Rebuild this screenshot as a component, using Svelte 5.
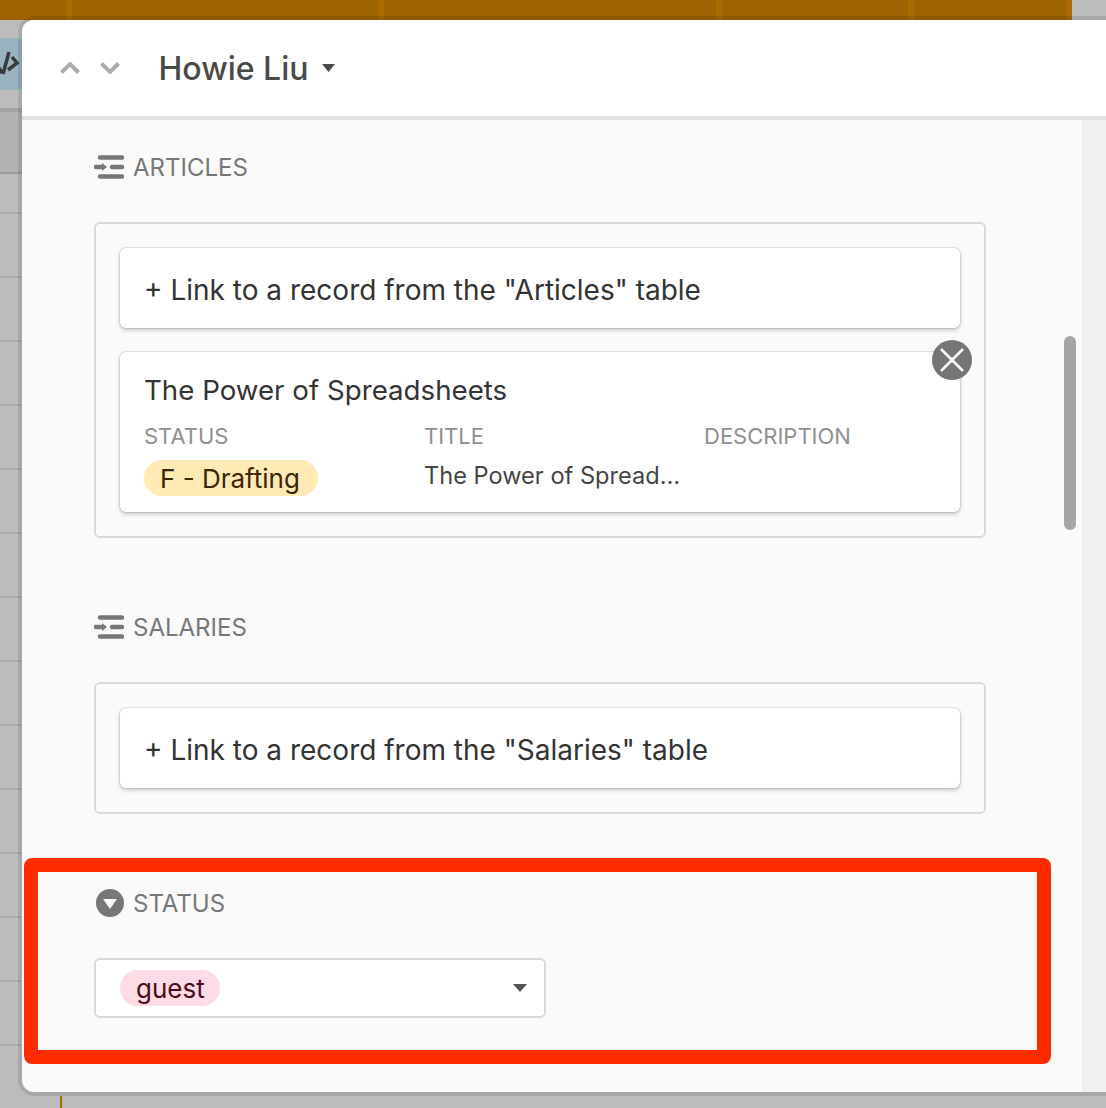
<script>
  const tabs = [72, 312, 338, 192, 158];
  const rows = Array.from({ length: 13 }, (_, i) => i);
</script>

<div class="backdrop">
  <div class="topbar">
    {#each tabs as w}
      <div class="tab" style="width:{w}px"></div>
    {/each}
  </div>
  <div class="band">
    <svg class="code" width="22" height="32" viewBox="0 0 22 32"><path d="M-4 17-1 20 2 25M9 4 3 26M12 9l5 6-9 7" /></svg>
  </div>
  <div class="headrow"></div>
  <div class="row first"></div>
  <div class="row short"></div>
  {#each rows as i}
    <div class="row"></div>
  {/each}
  <div class="tail"></div>
</div>

<div class="dialog">
  <header class="head">
    <svg class="chev" width="20" height="12" viewBox="0 0 20 12"><path d="M1.5 10.5 10 2l8.5 8.5" /></svg>
    <svg class="chev second" width="20" height="12" viewBox="0 0 20 12"><path d="M1.5 1.5 10 10l8.5-8.5" /></svg>
    <h1>Howie Liu</h1>
    <svg class="caret" width="13" height="8" viewBox="0 0 13 8"><path d="M0 0h13L6.5 8z" /></svg>
  </header>

  <div class="content">
    <main class="body">
      <section>
        <div class="label">
          <svg class="lnk" width="30" height="24" viewBox="0 0 30 24"><path d="M6 2.5h22M18 12h10M6 21.5h22M2 12h6" /><path class="fill" d="M8 8l5 4-5 4z" /></svg>
          <span>ARTICLES</span>
        </div>
        <div class="box">
          <div class="card link">+ Link to a record from the "Articles" table</div>
          <div class="card rec">
            <div class="rec-title">The Power of Spreadsheets</div>
            <div class="cols">
              <div class="col">
                <div class="col-h">STATUS</div>
                <span class="pill yellow">F - Drafting</span>
              </div>
              <div class="col">
                <div class="col-h">TITLE</div>
                <div class="col-v">The Power of Spread…</div>
              </div>
              <div class="col">
                <div class="col-h">DESCRIPTION</div>
              </div>
            </div>
            <div class="close">
              <svg width="24" height="24" viewBox="0 0 24 24"><path d="M1 1l22 22M23 1 1 23" /></svg>
            </div>
          </div>
        </div>
      </section>

      <section>
        <div class="label">
          <svg class="lnk" width="30" height="24" viewBox="0 0 30 24"><path d="M6 2.5h22M18 12h10M6 21.5h22M2 12h6" /><path class="fill" d="M8 8l5 4-5 4z" /></svg>
          <span>SALARIES</span>
        </div>
        <div class="box">
          <div class="card link">+ Link to a record from the "Salaries" table</div>
        </div>
      </section>

      <section>
        <div class="label">
          <svg class="sel" width="28" height="28" viewBox="0 0 28 28"><circle cx="14" cy="14" r="14" /><path d="M7 10h14l-7 10z" /></svg>
          <span>STATUS</span>
        </div>
        <div class="select">
          <span class="pill pink">guest</span>
          <svg class="caret" width="14" height="8" viewBox="0 0 14 8"><path d="M0 0h14L7 8z" /></svg>
        </div>
      </section>
    </main>
    <aside class="track"></aside>
  </div>

  <div class="thumb"></div>
  <div class="annotation"></div>
</div>

<style>
  :global(body) {
    margin: 0;
    background: #bbb;
    overflow: hidden;
    font-family: Inter, Roboto, "Liberation Sans", sans-serif;
  }

  .backdrop {
    height: 1108px;
    overflow: hidden;
    background: #bcbcbc;
    position: relative;
  }
  .topbar {
    width: 1072px;
    height: 20px;
    display: flex;
    background: #9d6400;
  }
  .tab {
    flex: none;
    box-sizing: border-box;
    border-right: 6px solid #aa6c00;
  }
  .band {
    margin-top: 18px;
    height: 52px;
    background: #99b4c0;
    display: flex;
    align-items: center;
  }
  .code {
    fill: none;
    stroke: #3a3a3a;
    stroke-width: 3.5;
    overflow: hidden;
  }
  .headrow {
    height: 18px;
    border-bottom: 4px solid #a4a4a4;
  }
  .row {
    height: 62px;
    border-bottom: 2px solid #a6abb0;
  }
  .row.first {
    height: 60px;
    background: #b2b2b2;
    border-bottom-color: #9c9c9c;
  }
  .row.short {
    height: 38px;
  }
  .row:last-of-type {
    border-bottom-width: 3px;
  }
  .tail {
    position: absolute;
    left: 60px;
    top: 1096px;
    width: 2px;
    height: 12px;
    background: #a86c00;
  }

  .dialog {
    position: absolute;
    left: 22px;
    top: 20px;
    width: 1084px;
    height: 1072px;
    background: #fafafa;
    border-radius: 12px 0 0 12px;
    box-shadow: 0 0 0 4px rgba(0, 0, 0, 0.1);
    display: flex;
    flex-direction: column;
    overflow: hidden;
  }
  .head {
    flex: none;
    height: 96px;
    background: #fff;
    border-bottom: 4px solid #e0e0e0;
    display: flex;
    align-items: center;
    padding-left: 38px;
  }
  .chev {
    fill: none;
    stroke: #acacac;
    stroke-width: 4;
  }
  .chev.second {
    margin-left: 20px;
  }
  h1 {
    margin: 0 0 0 38.5px;
    font-size: 32px;
    font-weight: 500;
    color: #4a4a4a;
    line-height: 40px;
    padding-top: 1px;
  }
  .head .caret {
    margin-left: 13.5px;
    fill: #4a4a4a;
  }

  .content {
    flex: 1;
    display: flex;
    min-height: 0;
  }
  .body {
    width: 1060px;
    flex: none;
    box-sizing: border-box;
    padding: 35px 0 0 72px;
    display: flex;
    flex-direction: column;
    gap: 77px;
  }
  .track {
    flex: none;
    width: 24px;
    background: #f0f0f0;
  }

  .label {
    display: flex;
    align-items: center;
    height: 24px;
    gap: 9px;
    color: #777;
    font-size: 24px;
    line-height: 24px;
  }
  .label span {
    padding-top: 1px;
  }
  .lnk {
    flex: none;
    fill: none;
    stroke: #777;
    stroke-width: 4.5;
    stroke-linecap: round;
  }
  .lnk .fill {
    fill: #777;
    stroke: none;
  }
  .sel {
    flex: none;
    fill: #777;
    margin-left: 2px;
  }
  .sel path {
    fill: #fafafa;
  }

  .box {
    margin-top: 43px;
    width: 892px;
    box-sizing: border-box;
    border: 2px solid #d9d9d9;
    border-radius: 6px;
    padding: 24px;
    display: flex;
    flex-direction: column;
    gap: 24px;
  }
  .card {
    background: #fff;
    border-radius: 6px;
    box-shadow: 0 0 0 1px rgba(0, 0, 0, 0.08), 0 2px 4px rgba(0, 0, 0, 0.22);
    color: #333;
    font-size: 28px;
    line-height: 34px;
  }
  .link {
    height: 80px;
    box-sizing: border-box;
    padding: 25px 24px;
  }
  .rec {
    position: relative;
    height: 160px;
    box-sizing: border-box;
    padding: 21px 24px 0;
  }
  .rec-title {
    font-size: 27.7px;
  }
  .cols {
    display: flex;
    margin-top: 14px;
  }
  .col {
    width: 280px;
    flex: none;
  }
  .col-h {
    color: #8f8f8f;
    font-size: 22px;
    line-height: 30px;
  }
  .col-v {
    margin-top: 7px;
    font-size: 23.6px;
    line-height: 36px;
    color: #444;
  }
  .pill {
    display: inline-block;
    height: 36px;
    line-height: 38px;
    border-radius: 18px;
    padding: 0 16px;
    font-size: 26px;
  }
  .yellow {
    margin-top: 9px;
    padding-right: 18px;
    background: #ffeab6;
    color: #3b2501;
  }
  .pink {
    padding-right: 15px;
    background: #ffdce5;
    color: #4c0c1c;
  }
  .close {
    position: absolute;
    right: -12px;
    top: -12px;
    width: 40px;
    height: 40px;
    border-radius: 50%;
    background: #757575;
    display: flex;
    align-items: center;
    justify-content: center;
  }
  .close svg {
    fill: none;
    stroke: #fff;
    stroke-width: 2.5;
  }

  .select {
    margin-top: 43px;
    width: 452px;
    height: 60px;
    box-sizing: border-box;
    background: #fff;
    border: 2px solid #d9d9d9;
    border-radius: 6px;
    display: flex;
    align-items: center;
    justify-content: space-between;
    padding: 0 17px 0 24px;
  }
  .select .caret {
    fill: #555;
  }

  .thumb {
    position: absolute;
    left: 1042px;
    top: 316px;
    width: 12px;
    height: 194px;
    background: #a5a5a5;
    border-radius: 6px;
  }
  .annotation {
    position: absolute;
    left: 2px;
    top: 838px;
    width: 1027px;
    height: 206px;
    box-sizing: border-box;
    border: 14px solid #ff2b00;
    border-radius: 8px;
    pointer-events: none;
  }
</style>
